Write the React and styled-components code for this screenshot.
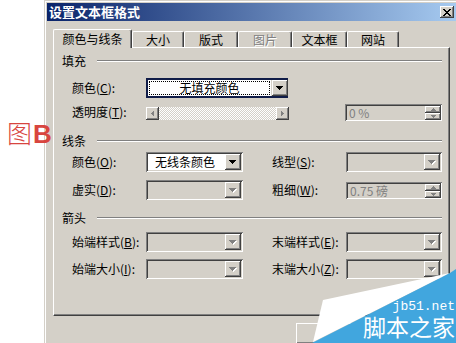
import React from 'react';
import styled, { createGlobalStyle, css } from 'styled-components';

const GlobalStyle = createGlobalStyle`
  html, body { margin: 0; padding: 0; background: #fff; overflow: hidden; }
  body {
    width: 456px; height: 343px;
    font-family: "Noto Sans CJK SC", "Liberation Sans", sans-serif;
    font-size: 12px; color: #000;
  }
`;

const raised = css`
  background: #d4d0c8;
  box-shadow: inset -1px -1px #404040, inset 1px 1px #fff, inset -2px -2px #808080;
`;

const sunken = css`
  box-shadow: inset 1px 1px #808080, inset -1px -1px #fff, inset 2px 2px #404040, inset -2px -2px #d4d0c8;
`;

const Stage = styled.div`
  position: relative;
  width: 456px;
  height: 343px;
  overflow: hidden;
  display: flex;
  padding-left: 44px;
  box-sizing: border-box;
`;

const Dialog = styled.div`
  flex: none;
  width: 415px;
  height: 360px;
  box-sizing: border-box;
  background: #d4d0c8;
  border: 1px solid #d4d0c8;
  box-shadow: inset 1px 1px #fff;
  padding: 2px;
  display: flex;
  flex-direction: column;
`;

const TitleBar = styled.div`
  height: 18px;
  flex: none;
  display: flex;
  align-items: center;
  justify-content: space-between;
  padding: 0 2px;
  background: linear-gradient(to right, #0a246a, #a6caf0);
`;

const Title = styled.span`
  color: #fff;
  font-weight: bold;
  font-size: 13px;
  line-height: 14px;
`;

const CloseBtn = styled.div`
  ${raised};
  width: 14px;
  height: 12px;
  display: flex;
  align-items: center;
  justify-content: center;
`;

const TabStrip = styled.div`
  display: flex;
  align-items: flex-end;
  height: 18px;
  margin: 8px 0 0 6px;
  position: relative;
  z-index: 1;
`;

const Tab = styled.div`
  box-sizing: border-box;
  flex: none;
  width: ${p => p.$w}px;
  height: ${p => (p.$active ? 19 : 16)}px;
  margin-bottom: ${p => (p.$active ? -1 : 0)}px;
  background: #d4d0c8;
  border-left: 1px solid #fff;
  border-top: 1px solid #fff;
  border-right: 1px solid #404040;
  box-shadow: inset -1px 0 #808080;
  border-radius: 2px 2px 0 0;
  display: flex;
  align-items: center;
  justify-content: center;
  line-height: 14px;
  color: ${p => (p.$disabled ? '#808080' : '#000')};
  text-shadow: ${p => (p.$disabled ? '1px 1px #fff' : 'none')};
`;

const Panel = styled.div`
  box-sizing: border-box;
  flex: none;
  height: 269px;
  margin: 0 6px;
  border-left: 1px solid #fff;
  border-top: 1px solid #fff;
  border-right: 1px solid #404040;
  border-bottom: 1px solid #404040;
  box-shadow: inset -1px -1px #808080;
  padding: 6px 7px 0 8px;
  display: flex;
  flex-direction: column;
`;

const Heading = styled.div`
  display: flex;
  align-items: center;
  height: 14px;
  margin-top: ${p => p.$mt || 0}px;
`;

const HeadText = styled.span`
  line-height: 14px;
`;

const Etch = styled.div`
  flex: 1;
  height: 0;
  border-top: 1px solid #808080;
  border-bottom: 1px solid #fff;
  margin-left: 11px;
`;

const Row = styled.div`
  display: flex;
  align-items: center;
  height: 20px;
  margin-top: ${p => p.$mt || 0}px;
  padding-left: 10px;
`;

const Label = styled.span`
  flex: none;
  width: 74px;
  margin-left: ${p => p.$ml || 0}px;
  white-space: nowrap;
  line-height: 14px;
`;

const Key = styled.span`
  text-decoration: underline;
`;

const Combo = styled.div`
  box-sizing: border-box;
  flex: none;
  width: ${p => p.$w}px;
  height: 20px;
  display: flex;
  padding: 2px;
  background: ${p => (p.$disabled ? '#d4d0c8' : '#fff')};
  ${sunken};
`;

const ComboText = styled.div`
  flex: 1;
  padding-left: 7px;
  line-height: 16px;
  white-space: nowrap;
`;

const DropBtn = styled.div`
  ${raised};
  flex: none;
  width: 16px;
  height: 16px;
  margin-left: auto;
  display: flex;
  align-items: center;
  justify-content: center;
`;

const ColorCombo = styled.div`
  box-sizing: border-box;
  flex: none;
  width: 142px;
  height: 20px;
  display: flex;
  border: 2px solid #101c48;
  border-right: none;
  background: #d4d0c8;
`;

const ColorFace = styled.div`
  flex: 1;
  background: #fff;
  padding: 1px;
  display: flex;
  margin-right: 1px;
`;

const Dotted = styled.div`
  flex: 1;
  border: 1px dotted #000;
  display: flex;
  align-items: center;
  justify-content: center;
  line-height: 12px;
`;

const Slider = styled.div`
  flex: none;
  width: 143px;
  height: 13px;
  align-self: flex-end;
  margin-bottom: 2px;
  display: flex;
`;

const ScrollBtn = styled.div`
  ${raised};
  flex: none;
  width: 13px;
  height: 13px;
  display: flex;
  align-items: center;
  justify-content: center;
`;

const Track = styled.div`
  flex: 1;
  background-color: #fff;
  background-image: repeating-conic-gradient(#d4d0c8 0 25%, #fff 0 50%);
  background-size: 2px 2px;
`;

const Spin = styled.div`
  box-sizing: border-box;
  flex: none;
  width: ${p => p.$w}px;
  height: 17px;
  margin-left: ${p => (p.$auto ? 'auto' : '0')};
  display: flex;
  padding: 2px 1px 1px 2px;
  background: #d4d0c8;
  ${sunken};
`;

const SpinText = styled.div`
  flex: 1;
  padding-left: 2px;
  line-height: 14px;
  color: #808080;
  white-space: nowrap;
`;

const SpinBtns = styled.div`
  flex: none;
  width: 16px;
  display: flex;
  flex-direction: column;
`;

const SpinBtn = styled.div`
  ${raised};
  flex: 1;
  display: flex;
  align-items: center;
  justify-content: center;
`;

const Buttons = styled.div`
  display: flex;
  justify-content: flex-end;
  gap: 4px;
  margin: 7px 6px 0 0;
`;

const Button = styled.div`
  ${raised};
  width: 75px;
  height: 21px;
`;

const FigLabel = styled.div`
  position: absolute;
  left: 7px;
  top: 117px;
  color: #d8453f;
  display: flex;
  align-items: baseline;
  z-index: 3;
`;

const FigChar = styled.span`
  font-family: "Noto Sans CJK SC", sans-serif;
  font-weight: 300;
  font-size: 25px;
  line-height: 30px;
`;

const FigLetter = styled.span`
  font-family: "Liberation Sans", sans-serif;
  font-weight: bold;
  font-size: 26px;
  line-height: 30px;
  margin-left: 1px;
`;

const Watermark = styled.div`
  position: absolute;
  right: 0;
  bottom: 0;
  width: 146px;
  height: 75px;
  z-index: 3;
`;

const WmSvg = styled.svg`
  position: absolute;
  left: 0;
  top: 0;
`;

const WmSite = styled.span`
  position: absolute;
  right: 1px;
  top: 33px;
  color: #fff;
  font-family: "Liberation Mono", monospace;
  font-size: 13px;
  line-height: 12px;
`;

const WmName = styled.span`
  position: absolute;
  right: 1px;
  top: 46px;
  color: #fff;
  font-family: "Noto Sans CJK SC", sans-serif;
  font-size: 23px;
  line-height: 24px;
`;

const DownTri = ({ disabled }) => (
  <svg width="8" height="5" viewBox="0 0 8 5" shapeRendering="crispEdges">
    {disabled && (
      <path d="M1 1h7v1H1zM2 2h5v1H2zM3 3h3v1H3zM4 4h1v1H4z" fill="#fff" />
    )}
    <path d="M0 0h7v1H0zM1 1h5v1H1zM2 2h3v1H2zM3 3h1v1H3z" fill={disabled ? '#808080' : '#000'} />
  </svg>
);

const SmallTri = ({ up }) => (
  <svg width="5" height="3" viewBox="0 0 5 3" shapeRendering="crispEdges">
    <path
      d={up ? 'M2 0h1v1H2zM1 1h3v1H1zM0 2h5v1H0z' : 'M0 0h5v1H0zM1 1h3v1H1zM2 2h1v1H2z'}
      fill="#808080"
    />
  </svg>
);

const SideTri = ({ left }) => (
  <svg width="3" height="5" viewBox="0 0 3 5" shapeRendering="crispEdges">
    <path
      d={left ? 'M2 0h1v5H2zM1 1h1v3H1zM0 2h1v1H0z' : 'M0 0h1v5H0zM1 1h1v3H1zM2 2h1v1H2z'}
      fill="#808080"
    />
  </svg>
);

const CloseX = () => (
  <svg width="8" height="7" viewBox="0 0 8 7" shapeRendering="crispEdges">
    <path
      d="M0 0h2v1H0zM6 0h2v1H6zM1 1h2v1H1zM5 1h2v1H5zM2 2h4v1H2zM3 3h2v1H3zM2 4h4v1H2zM1 5h2v1H1zM5 5h2v1H5zM0 6h2v1H0zM6 6h2v1H6z"
      fill="#000"
    />
  </svg>
);

const tabs = [
  { t: '颜色与线条', w: 79, active: true },
  { t: '大小', w: 52 },
  { t: '版式', w: 54 },
  { t: '图片', w: 54, disabled: true },
  { t: '文本框', w: 55 },
  { t: '网站', w: 52 },
];

const Lbl = ({ text, k, ml }) => (
  <Label $ml={ml}>
    {text}(<Key>{k}</Key>):
  </Label>
);

const DisabledCombo = ({ w }) => (
  <Combo $w={w} $disabled>
    <DropBtn>
      <DownTri disabled />
    </DropBtn>
  </Combo>
);

const SpinBox = ({ w, text, auto }) => (
  <Spin $w={w} $auto={auto}>
    <SpinText>{text}</SpinText>
    <SpinBtns>
      <SpinBtn>
        <SmallTri up />
      </SpinBtn>
      <SpinBtn>
        <SmallTri />
      </SpinBtn>
    </SpinBtns>
  </Spin>
);

export default function App() {
  return (
    <>
      <GlobalStyle />
      <Stage>
        <Dialog>
          <TitleBar>
            <Title>设置文本框格式</Title>
            <CloseBtn>
              <CloseX />
            </CloseBtn>
          </TitleBar>
          <TabStrip>
            {tabs.map(tb => (
              <Tab key={tb.t} $w={tb.w} $active={tb.active} $disabled={tb.disabled}>
                {tb.t}
              </Tab>
            ))}
          </TabStrip>
          <Panel>
            <Heading>
              <HeadText>填充</HeadText>
              <Etch />
            </Heading>
            <Row $mt={10}>
              <Lbl text="颜色" k="C" />
              <ColorCombo>
                <ColorFace>
                  <Dotted>无填充颜色</Dotted>
                </ColorFace>
                <DropBtn>
                  <DownTri />
                </DropBtn>
              </ColorCombo>
            </Row>
            <Row $mt={4}>
              <Lbl text="透明度" k="T" />
              <Slider>
                <ScrollBtn>
                  <SideTri left />
                </ScrollBtn>
                <Track />
                <ScrollBtn>
                  <SideTri />
                </ScrollBtn>
              </Slider>
              <SpinBox w={97} text="0 %" auto />
            </Row>
            <Heading $mt={12}>
              <HeadText>线条</HeadText>
              <Etch />
            </Heading>
            <Row $mt={4}>
              <Lbl text="颜色" k="O" />
              <Combo $w={97}>
                <ComboText>无线条颜色</ComboText>
                <DropBtn>
                  <DownTri />
                </DropBtn>
              </Combo>
              <Lbl text="线型" k="S" ml={29} />
              <DisabledCombo w={96} />
            </Row>
            <Row $mt={8}>
              <Lbl text="虚实" k="D" />
              <DisabledCombo w={97} />
              <Lbl text="粗细" k="W" ml={29} />
              <SpinBox w={96} text="0.75 磅" />
            </Row>
            <Heading $mt={11}>
              <HeadText>箭头</HeadText>
              <Etch />
            </Heading>
            <Row $mt={7}>
              <Lbl text="始端样式" k="B" />
              <DisabledCombo w={97} />
              <Lbl text="末端样式" k="E" ml={29} />
              <DisabledCombo w={96} />
            </Row>
            <Row $mt={7}>
              <Lbl text="始端大小" k="I" />
              <DisabledCombo w={97} />
              <Lbl text="末端大小" k="Z" ml={29} />
              <DisabledCombo w={96} />
            </Row>
          </Panel>
          <Buttons>
            <Button />
            <Button />
          </Buttons>
        </Dialog>
        <FigLabel>
          <FigChar>图</FigChar>
          <FigLetter>B</FigLetter>
        </FigLabel>
        <Watermark>
          <WmSvg width="146" height="75" viewBox="0 0 146 75">
            <polygon points="13,32 140,5 3,74" fill="#fff" />
            <polygon points="140,5 146,1 146,75 2,75" fill="#41a6de" />
          </WmSvg>
          <WmSite>jb51.net</WmSite>
          <WmName>脚本之家</WmName>
        </Watermark>
      </Stage>
    </>
  );
}
